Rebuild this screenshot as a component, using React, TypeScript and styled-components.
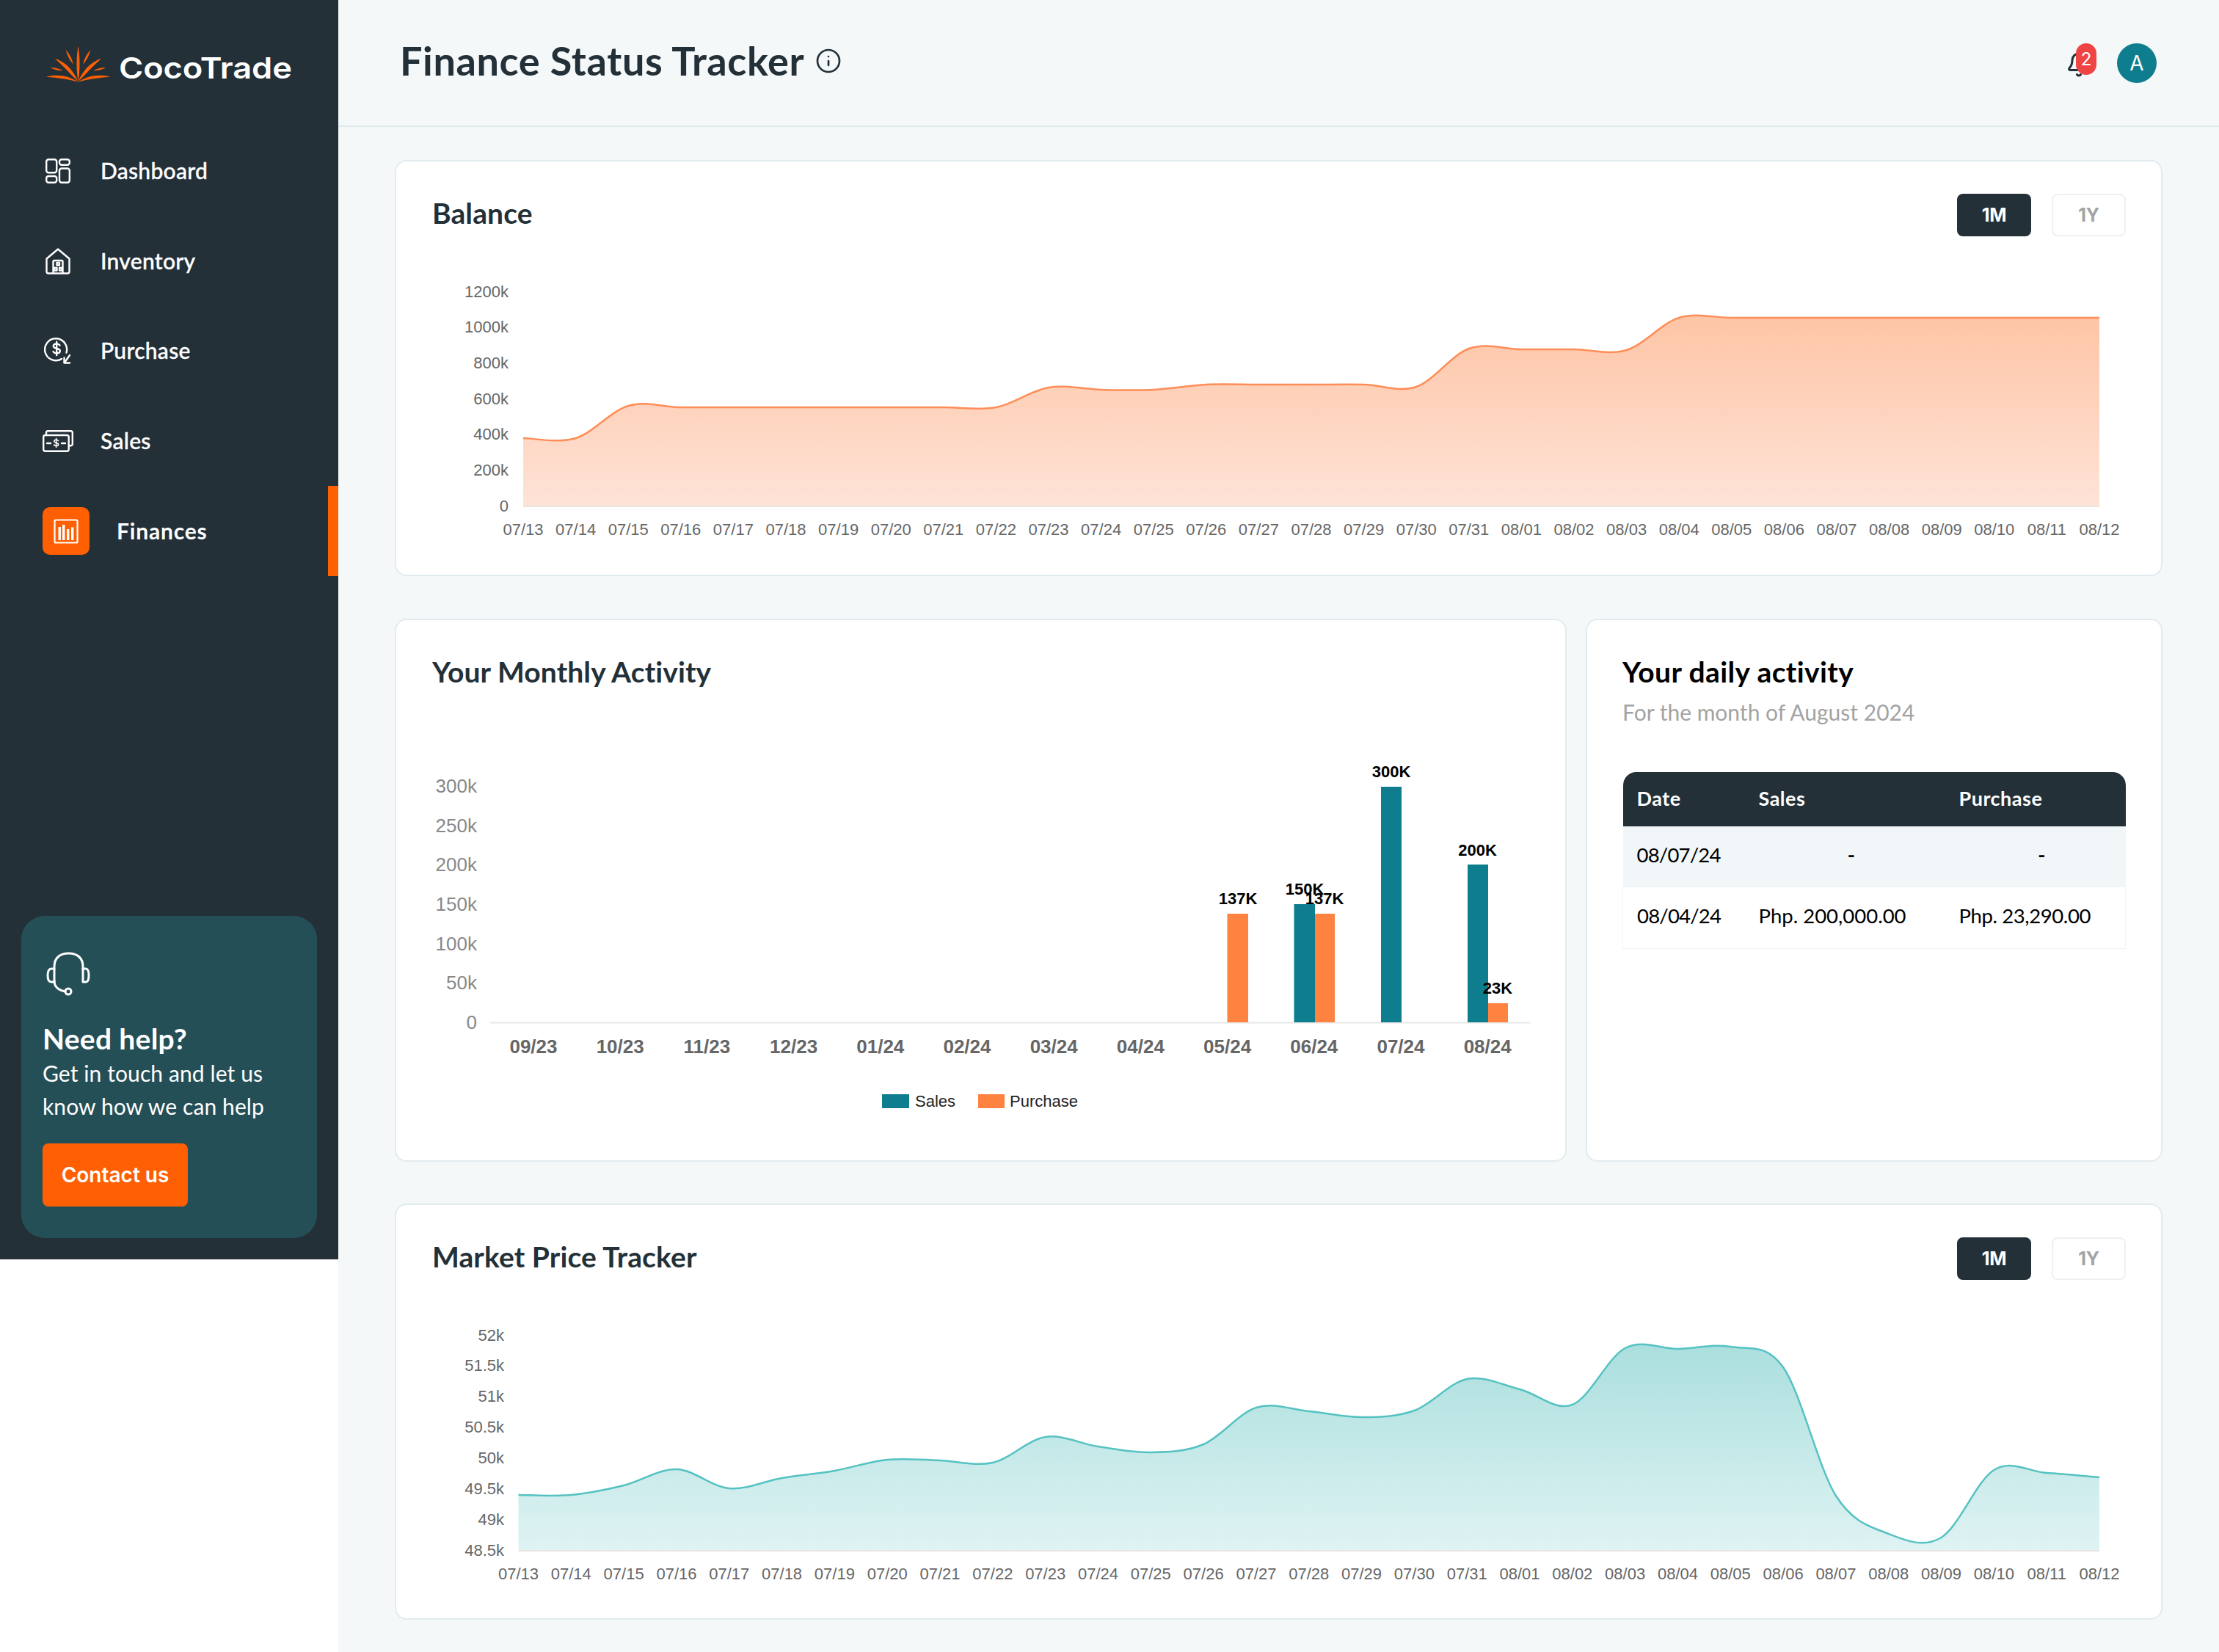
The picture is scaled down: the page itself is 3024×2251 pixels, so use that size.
import React from 'react';
import styled, { createGlobalStyle } from 'styled-components';
import { Bell, Info } from 'lucide-react';

const UI = `Lato, "Noto Sans", sans-serif`;
const INTER = `Inter, "Noto Sans", sans-serif`;
const CHART = `"Liberation Sans", Arial, sans-serif`;
const DARK = '#233038';
const ORANGE = '#FF5F03';

const Global = createGlobalStyle`
  html, body { margin: 0; padding: 0; background: #fff; }
  * { box-sizing: border-box; }
`;

const Page = styled.div`
  display: flex;
  align-items: flex-start;
  width: 3024px;
  font-family: ${UI};
`;

const Sidebar = styled.aside`
  width: 461px;
  height: 1716px;
  flex: none;
  display: flex;
  flex-direction: column;
  background: ${DARK};
  color: #fff;
`;

const Brand = styled.div`
  height: 172px;
  display: flex;
  align-items: center;
  padding-left: 63px;
  gap: 12px;
`;

const BrandMark = styled.svg`
  width: 87px;
  height: 52px;
  margin-top: 2px;
`;

const BrandName = styled.span`
  font-family: ${INTER};
  font-weight: 600;
  font-size: 40px;
  letter-spacing: -0.1px;
  margin-top: 12px;
  transform: scaleX(1.13);
  transform-origin: left center;
`;

const Nav = styled.nav`
  display: flex;
  flex-direction: column;
`;

const NavRow = styled.div<{ $active?: boolean }>`
  position: relative;
  height: 122.6px;
  display: flex;
  align-items: center;
  padding-left: 58px;
  gap: 37px;
  font-size: 30px;
  font-weight: ${(p) => (p.$active ? 700 : 500)};
  letter-spacing: ${(p) => (p.$active ? 0.8 : 0.3)}px;
  ${(p) => !p.$active && `-webkit-text-stroke: 0.35px #fff;`}
  ${(p) =>
    p.$active &&
    `&::after { content: ''; position: absolute; right: 0; top: 0; bottom: 0; width: 14px; background: ${ORANGE}; }`}
`;

const NavLabel = styled.span`
  margin-top: -2px;
`;

const NavIcon = styled.span<{ $active?: boolean }>`
  width: ${(p) => (p.$active ? 64 : 42)}px;
  height: ${(p) => (p.$active ? 65 : 42)}px;
  display: flex;
  align-items: center;
  justify-content: center;
  border-radius: 10px;
  background: ${(p) => (p.$active ? ORANGE : 'transparent')};
`;

const HelpCard = styled.div`
  margin: auto 29px 29px;
  padding: 49px 29px 43px;
  border-radius: 32px;
  background: #254f57;
`;

const HelpIcon = styled.svg`
  display: block;
  width: 60px;
  height: 60px;
  margin-left: 5px;
`;

const HelpTitle = styled.div`
  margin-top: 34px;
  font-size: 39px;
  line-height: 48px;
  font-weight: 700;
  letter-spacing: 0.3px;
`;

const HelpText = styled.div`
  margin-top: 1px;
  font-size: 30px;
  line-height: 45px;
  letter-spacing: 0.1px;
`;

const ContactButton = styled.button`
  display: block;
  margin-top: 28px;
  width: 198px;
  height: 86px;
  border: 0;
  border-radius: 8px;
  background: ${ORANGE};
  color: #fff;
  font-family: ${INTER};
  font-weight: 600;
  font-size: 28px;
`;

const Main = styled.main`
  flex: 1;
  min-height: 2251px;
  background: #f4f8f9;
`;

const Header = styled.header`
  height: 173px;
  display: flex;
  align-items: center;
  padding: 0 85px 0 84px;
  border-bottom: 2px solid #e0eaec;
  color: ${DARK};
`;

const PageTitle = styled.h1`
  margin: -5px 0 0;
  font-size: 54px;
  font-weight: 700;
  line-height: 1;
  letter-spacing: 0.6px;
`;

const TitleInfo = styled.span`
  display: flex;
  margin-left: 15px;
  margin-bottom: 5px;
`;

const HeaderRight = styled.div`
  margin-left: auto;
  display: flex;
  align-items: center;
  gap: 28px;
`;

const BellWrap = styled.span`
  position: relative;
  display: flex;
  width: 38px;
  height: 54px;
  align-items: center;
  padding-top: 4px;
  margin-left: -4px;
`;

const BellBadge = styled.span`
  position: absolute;
  left: 14px;
  top: 0;
  width: 28px;
  height: 43px;
  border-radius: 14px;
  background: #ef4444;
  color: #fff;
  font-family: ${INTER};
  font-size: 24px;
  display: flex;
  align-items: center;
  justify-content: center;
`;

const Avatar = styled.span`
  width: 54px;
  height: 54px;
  margin-left: 4px;
  border-radius: 50%;
  background: #0e7e8e;
  color: #fff;
  font-family: ${INTER};
  font-size: 28px;
  display: flex;
  align-items: center;
  justify-content: center;
`;

const Content = styled.div`
  display: flex;
  flex-direction: column;
  padding: 45px 77px 44px 77px;
`;

const Card = styled.section`
  background: #fff;
  border: 2px solid #e2ebee;
  border-radius: 16px;
  overflow: hidden;
`;

const CardHead = styled.div`
  display: flex;
  align-items: flex-start;
  justify-content: space-between;
  min-height: 58px;
  margin: 44px 48px 0 49px;
`;

const CardTitle = styled.h2<{ $black?: boolean }>`
  margin: 0;
  font-size: 39px;
  line-height: 52px;
  font-weight: 700;
  letter-spacing: ${(p) => (p.$black ? 0.4 : 0.1)}px;
  color: ${(p) => (p.$black ? '#000' : DARK)};
`;

const RangeGroup = styled.div`
  display: flex;
  gap: 28px;
`;

const RangeButton = styled.button<{ $on?: boolean }>`
  width: 101px;
  height: 58px;
  border-radius: 8px;
  border: 2px solid ${(p) => (p.$on ? DARK : '#f0f0f0')};
  background: ${(p) => (p.$on ? DARK : '#fff')};
  color: ${(p) => (p.$on ? '#fff' : '#a3a3a3')};
  font-family: ${INTER};
  font-weight: 700;
  font-size: 25px;
  letter-spacing: -0.4px;
`;

const Chart = styled.svg`
  display: block;
`;

const MiddleRow = styled.div`
  display: grid;
  grid-template-columns: 1597px 786px;
  gap: 26px;
  margin: 58px 0 57px;
`;

const DailyBody = styled.div`
  padding: 44px 48px;
`;

const DailySub = styled.div`
  margin-top: 7px;
  font-size: 30px;
  line-height: 44px;
  color: #a3a3a3;
`;

const Table = styled.table`
  width: 685px;
  margin-top: 60px;
  border-collapse: collapse;
  table-layout: fixed;
  font-size: 27.5px;
  color: #000;
`;

const HeadCell = styled.th<{ $w: number }>`
  width: ${(p) => p.$w}px;
  height: 74px;
  padding: 0 0 4px 19px;
  background: ${DARK};
  color: #fff;
  font-size: 27px;
  font-weight: 700;
  letter-spacing: 0.5px;
  text-align: left;
  &:first-child { border-top-left-radius: 18px; }
  &:last-child { border-top-right-radius: 18px; }
`;

const Row = styled.tr<{ $tint?: boolean; $h: number }>`
  height: ${(p) => p.$h}px;
  background: ${(p) => (p.$tint ? '#f1f6f8' : '#fff')};
  ${(p) => !p.$tint && `border: 1px solid #f2f4f5;`}
`;

const Cell = styled.td<{ $dash?: boolean; $date?: boolean; $tight?: boolean }>`
  padding: 0 0 5px ${(p) => (p.$dash ? 18 : 19)}px;
  text-align: ${(p) => (p.$dash ? 'center' : 'left')};
  ${(p) => p.$date && `letter-spacing: -0.8px;`}
  ${(p) => p.$tight && `letter-spacing: -0.4px;`}
  ${(p) => p.$dash && `font-weight: 700;`}
`;

const BarLabel = styled.text`
  font-family: ${CHART};
  font-size: 22px;
  font-weight: 700;
  fill: #000;
  text-anchor: middle;
  dominant-baseline: central;
`;

const AxisText = styled.text<{ $anchor?: string }>`
  font-family: ${CHART};
  font-size: 22px;
  fill: #666;
  text-anchor: ${(p) => p.$anchor || 'middle'};
  dominant-baseline: central;
`;

const MonthLabel = styled.text`
  font-family: ${CHART};
  font-size: 26px;
  font-weight: 700;
  fill: #666;
  text-anchor: middle;
  dominant-baseline: central;
`;

const MonthTick = styled.text`
  font-family: ${CHART};
  font-size: 26px;
  fill: #888;
  text-anchor: end;
  dominant-baseline: central;
`;

const LegendText = styled.text`
  font-family: ${CHART};
  font-size: 22px;
  fill: #222;
  dominant-baseline: central;
`;

const dates = [
  '07/13','07/14','07/15','07/16','07/17','07/18','07/19','07/20','07/21','07/22','07/23','07/24','07/25','07/26','07/27','07/28','07/29','07/30','07/31',
  '08/01','08/02','08/03','08/04','08/05','08/06','08/07','08/08','08/09','08/10','08/11','08/12',
];

function spline(pts: [number, number][]) {
  let d = `M${pts[0][0]} ${pts[0][1]}`;
  for (let i = 0; i < pts.length - 1; i++) {
    const p0 = pts[Math.max(i - 1, 0)];
    const p1 = pts[i];
    const p2 = pts[i + 1];
    const p3 = pts[Math.min(i + 2, pts.length - 1)];
    const c1x = p1[0] + (p2[0] - p0[0]) / 6;
    const c1y = p1[1] + (p2[1] - p0[1]) / 6;
    const c2x = p2[0] - (p3[0] - p1[0]) / 6;
    const c2y = p2[1] - (p3[1] - p1[1]) / 6;
    d += ` C${c1x.toFixed(1)} ${c1y.toFixed(1)} ${c2x.toFixed(1)} ${c2y.toFixed(1)} ${p2[0].toFixed(1)} ${p2[1]}`;
  }
  return d;
}

type AreaProps = {
  id: string;
  view: [number, number, number, number];
  left: number;
  right: number;
  base: number;
  ys: number[];
  tickRight: number;
  ticks: string[];
  tickTop: number;
  labelY: number;
  line: string;
  top: string;
  bottom: string;
  gradTop: number;
};

function AreaChart(p: AreaProps) {
  const step = (p.right - p.left) / (p.ys.length - 1);
  const pts = p.ys.map((y, i) => [p.left + step * i, y] as [number, number]);
  const d = spline(pts);
  const tickStep = (p.base - p.tickTop) / (p.ticks.length - 1);
  return (
    <Chart width={p.view[2]} height={p.view[3]} viewBox={p.view.join(' ')}>
      <defs>
        <linearGradient id={p.id} gradientUnits="userSpaceOnUse" x1="0" x2="0" y1={p.gradTop} y2={p.base}>
          <stop offset="0" stopColor={p.top} />
          <stop offset="1" stopColor={p.bottom} />
        </linearGradient>
      </defs>
      {p.ticks.map((t, i) => (
        <AxisText key={t} $anchor="end" x={p.tickRight} y={p.tickTop + tickStep * i}>
          {t}
        </AxisText>
      ))}
      <path d={`${d} L${p.right} ${p.base} L${p.left} ${p.base} Z`} fill={`url(#${p.id})`} />
      <path d={d} fill="none" stroke={p.line} strokeWidth={2.5} />
      <line x1={p.left} x2={p.right} y1={p.base + 1} y2={p.base + 1} stroke="#e8e4e2" strokeWidth={2} />
      {dates.map((t, i) => (
        <AxisText key={t} x={p.left + step * i} y={p.labelY}>
          {t}
        </AxisText>
      ))}
    </Chart>
  );
}

const months = ['09/23','10/23','11/23','12/23','01/24','02/24','03/24','04/24','05/24','06/24','07/24','08/24'];
const monthTicks = ['300k','250k','200k','150k','100k','50k','0'];
const TEAL = '#0e7e8e';
const BAR_ORANGE = '#ff8340';
const bars = [
  { x: 1672.5, w: 28.5, top: 1245, c: BAR_ORANGE },
  { x: 1763.5, w: 28.5, top: 1232, c: TEAL },
  { x: 1792, w: 27, top: 1245, c: BAR_ORANGE },
  { x: 1882, w: 28, top: 1072, c: TEAL },
  { x: 2000, w: 28, top: 1178, c: TEAL },
  { x: 2028, w: 27, top: 1367, c: BAR_ORANGE },
];
const barLabels = [
  { t: '137K', x: 1687, y: 1224 },
  { t: '150K', x: 1778, y: 1211 },
  { t: '137K', x: 1805, y: 1224 },
  { t: '300K', x: 1896, y: 1051 },
  { t: '200K', x: 2013.5, y: 1158 },
  { t: '23K', x: 2041, y: 1346 },
];

function MonthlyChart() {
  return (
    <Chart width={1593} height={634} viewBox="540 947 1593 634">
      {monthTicks.map((t, i) => (
        <MonthTick key={t} x={650} y={1071 + i * 53.67}>
          {t}
        </MonthTick>
      ))}
      <line x1={668} x2={2086} y1={1393.5} y2={1393.5} stroke="#e8e8e8" strokeWidth={2} />
      {months.map((t, i) => (
        <MonthLabel key={t} x={727 + i * 118.2} y={1426}>
          {t}
        </MonthLabel>
      ))}
      {bars.map((b) => (
        <rect key={b.x} x={b.x} y={b.top} width={b.w} height={1393 - b.top} fill={b.c} />
      ))}
      {barLabels.map((b) => (
        <BarLabel key={b.x} x={b.x} y={b.y}>
          {b.t}
        </BarLabel>
      ))}
      <rect x={1202} y={1491} width={37} height={19} fill={TEAL} />
      <LegendText x={1247} y={1500}>Sales</LegendText>
      <rect x={1333} y={1491} width={36} height={19} fill={BAR_ORANGE} />
      <LegendText x={1376} y={1500}>Purchase</LegendText>
    </Chart>
  );
}

const balanceYs = [597, 597, 553, 555, 555, 555, 555, 555, 555, 555, 528, 531, 531, 524, 524, 524, 524, 527, 475, 476, 476, 477, 433, 433, 433, 433, 433, 433, 433, 433, 433];
const marketYs = [2037, 2037, 2024, 2002, 2028, 2014, 2004, 1989, 1990, 1993, 1958, 1971, 1979, 1968, 1918, 1923, 1931, 1922, 1879, 1893, 1914, 1837, 1838, 1835, 1863, 2038, 2090, 2095, 2003, 2007, 2013];

const iconStroke = { fill: 'none', stroke: '#fff', strokeWidth: 2.4, strokeLinecap: 'round', strokeLinejoin: 'round' } as const;

const DashboardIcon = () => (
  <svg width="34" height="34" viewBox="0 0 34 34" {...iconStroke}>
    <rect x="1.2" y="1.2" width="14" height="18" rx="3" />
    <rect x="19" y="1.2" width="13.8" height="7.5" rx="3" />
    <rect x="1.2" y="24" width="14" height="8.8" rx="3" />
    <rect x="19" y="13.5" width="13.8" height="19.3" rx="3" />
  </svg>
);

const InventoryIcon = () => (
  <svg width="34" height="36" viewBox="0 0 34 36" {...iconStroke}>
    <path d="M1.5 14.5 L17 1.5 L32.5 14.5 V32 a2.5 2.5 0 0 1 -2.5 2.5 H4 a2.5 2.5 0 0 1 -2.5 -2.5 Z" />
    <path d="M10.5 34 V18.5 a1.5 1.5 0 0 1 1.5 -1.5 H22 a1.5 1.5 0 0 1 1.5 1.5 V34" />
    <rect x="15.5" y="20" width="3.5" height="3.5" />
    <rect x="12" y="27" width="3.5" height="3.5" />
    <rect x="19" y="27" width="3.5" height="3.5" />
  </svg>
);

const PurchaseIcon = () => (
  <svg width="38" height="38" viewBox="0 0 38 38" {...iconStroke}>
    <path d="M30.5 21.5 A15 15 0 1 0 24 30" />
    <path d="M21.5 11.5 C20.5 10 19 9.5 17 9.5 C14.5 9.5 12.8 10.8 12.8 12.8 C12.8 17 21.8 14.5 21.8 19 C21.8 21 20 22.3 17.3 22.3 C15 22.3 13.3 21.5 12.5 20 M17.2 6.8 V25" />
    <path d="M35 25 L28 35 M27.5 28.5 V35.5 H35" />
  </svg>
);

const SalesIcon = () => (
  <svg width="42" height="30" viewBox="0 0 42 30" {...iconStroke}>
    <rect x="1.2" y="7" width="34.5" height="21.8" rx="2.5" />
    <path d="M5 7 V3.5 a2.3 2.3 0 0 1 2.3 -2.3 H38.5 a2.3 2.3 0 0 1 2.3 2.3 V19 a2.3 2.3 0 0 1 -2.3 2.3 H36" />
    <path d="M6 18 H11 M26 18 H31" />
    <path d="M21.5 14.5 C20.8 13.6 19.8 13.2 18.5 13.2 C16.9 13.2 15.8 14 15.8 15.2 C15.8 17.9 21.6 16.5 21.6 19.4 C21.6 20.7 20.4 21.5 18.7 21.5 C17.2 21.5 16.2 21 15.6 20 M18.6 11.5 V23.5" strokeWidth={1.6} />
  </svg>
);

const FinancesIcon = () => (
  <svg width="34" height="34" viewBox="0 0 34 34" fill="none" stroke="#fff" strokeWidth="2.2">
    <rect x="1.5" y="1.5" width="31" height="31" rx="1.5" />
    <g fill="#fff" stroke="none">
      <rect x="6.5" y="11" width="3.4" height="18" />
      <rect x="12" y="8" width="3.4" height="21" />
      <rect x="18" y="14" width="3.4" height="15" />
      <rect x="24" y="11.5" width="3.4" height="17.5" />
    </g>
  </svg>
);

const LeafHalf = () => (
  <>
    <path d="M270 203 C285 220 296 240 300 262 C285 245 275 225 270 203 Z" />
    <path d="M225 238 C265 250 302 285 319 332 C287 300 257 265 225 238 Z" />
    <path d="M207 276 C225 274 245 280 258 288 C240 288 222 284 207 276 Z" />
    <path d="M190 313 C235 300 285 310 320 334 C280 322 235 316 190 313 Z" />
  </>
);

export default function App() {
  return (
    <Page>
      <Global />
      <Sidebar>
        <Brand>
          <BrandMark viewBox="190 185 260 150">
            <g fill="#FF5F03">
              <path d="M320 333 C311 280 313 230 320 187 C327 230 329 280 320 333 Z" />
              <LeafHalf />
              <g transform="translate(640 0) scale(-1 1)">
                <LeafHalf />
              </g>
            </g>
          </BrandMark>
          <BrandName>CocoTrade</BrandName>
        </Brand>
        <Nav>
          <NavRow><NavIcon><DashboardIcon /></NavIcon><NavLabel>Dashboard</NavLabel></NavRow>
          <NavRow><NavIcon><InventoryIcon /></NavIcon><NavLabel>Inventory</NavLabel></NavRow>
          <NavRow><NavIcon><PurchaseIcon /></NavIcon><NavLabel>Purchase</NavLabel></NavRow>
          <NavRow><NavIcon><SalesIcon /></NavIcon><NavLabel>Sales</NavLabel></NavRow>
          <NavRow $active><NavIcon $active><FinancesIcon /></NavIcon><NavLabel>Finances</NavLabel></NavRow>
        </Nav>
        <HelpCard>
          <HelpIcon viewBox="0 0 60 60" fill="none" stroke="#fff" strokeWidth="3" strokeLinecap="round" strokeLinejoin="round">
            <path d="M11 40 V20 C11 8 19 2 30.5 2 C42 2 50 8 50 20 V24" />
            <path d="M11 40 C11 48 18 53 26 54" />
            <path d="M11 23 H7 C3 23 2 27 2 32 C2 37 3 41 7 41 H11" />
            <path d="M50 23 H54 C57 23 58 27 58 32 C58 37 57 41 54 41 H50 Z" />
            <circle cx="30" cy="54" r="4" />
          </HelpIcon>
          <HelpTitle>Need help?</HelpTitle>
          <HelpText>Get in touch and let us<br />know how we can help</HelpText>
          <ContactButton>Contact us</ContactButton>
        </HelpCard>
      </Sidebar>
      <Main>
        <Header>
          <PageTitle>Finance Status Tracker</PageTitle>
          <TitleInfo><Info size={36} strokeWidth={1.8} /></TitleInfo>
          <HeaderRight>
            <BellWrap>
              <Bell size={36} strokeWidth={2} />
              <BellBadge>2</BellBadge>
            </BellWrap>
            <Avatar>A</Avatar>
          </HeaderRight>
        </Header>
        <Content>
          <Card>
            <CardHead>
              <CardTitle>Balance</CardTitle>
              <RangeGroup>
                <RangeButton $on>1M</RangeButton>
                <RangeButton>1Y</RangeButton>
              </RangeGroup>
            </CardHead>
            <AreaChart
              id="balance-fill"
              view={[540, 322, 2405, 461]}
              left={713}
              right={2861}
              base={689}
              ys={balanceYs}
              tickRight={693}
              tickTop={397}
              ticks={['1200k', '1000k', '800k', '600k', '400k', '200k', '0']}
              labelY={721}
              line="#ff8d57"
              top="#fec5a6"
              bottom="#fee3d7"
              gradTop={433}
            />
          </Card>
          <MiddleRow>
            <Card>
              <CardHead>
                <CardTitle>Your Monthly Activity</CardTitle>
              </CardHead>
              <MonthlyChart />
            </Card>
            <Card>
              <DailyBody>
                <CardTitle $black>Your daily activity</CardTitle>
                <DailySub>For the month of August 2024</DailySub>
                <Table>
                  <thead>
                    <tr>
                      <HeadCell $w={166}>Date</HeadCell>
                      <HeadCell $w={273}>Sales</HeadCell>
                      <HeadCell $w={246}>Purchase</HeadCell>
                    </tr>
                  </thead>
                  <tbody>
                    <Row $tint $h={82}>
                      <Cell $date>08/07/24</Cell>
                      <Cell $dash>-</Cell>
                      <Cell $dash>-</Cell>
                    </Row>
                    <Row $h={84}>
                      <Cell $date>08/04/24</Cell>
                      <Cell>Php. 200,000.00</Cell>
                      <Cell $tight>Php. 23,290.00</Cell>
                    </Row>
                  </tbody>
                </Table>
              </DailyBody>
            </Card>
          </MiddleRow>
          <Card>
            <CardHead>
              <CardTitle>Market Price Tracker</CardTitle>
              <RangeGroup>
                <RangeButton $on>1M</RangeButton>
                <RangeButton>1Y</RangeButton>
              </RangeGroup>
            </CardHead>
            <AreaChart
              id="market-fill"
              view={[540, 1744, 2405, 461]}
              left={706.5}
              right={2861}
              base={2112}
              ys={marketYs}
              tickRight={687}
              tickTop={1819}
              ticks={['52k', '51.5k', '51k', '50.5k', '50k', '49.5k', '49k', '48.5k']}
              labelY={2144}
              line="#55c2c2"
              top="#abdfde"
              bottom="#dff3f3"
              gradTop={1835}
            />
          </Card>
        </Content>
      </Main>
    </Page>
  );
}
